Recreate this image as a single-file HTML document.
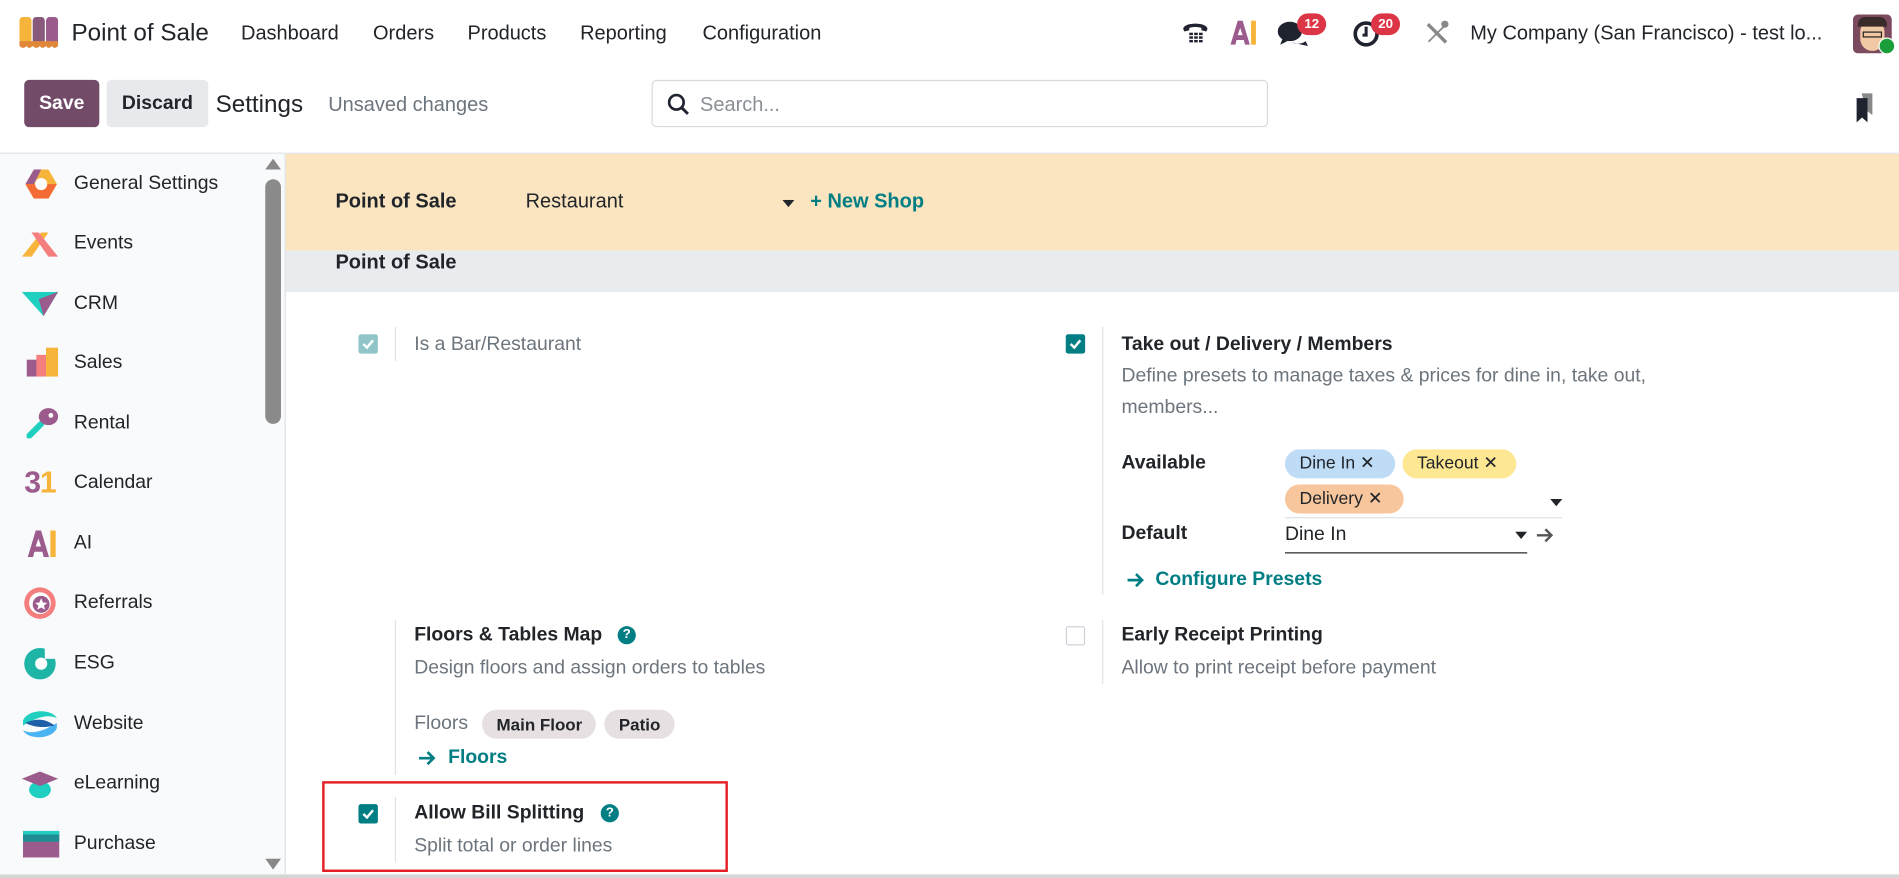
<!DOCTYPE html>
<html><head><meta charset="utf-8"><style>
html,body{margin:0;padding:0;width:1899px;height:878px;overflow:hidden;background:#fff}
#w{position:absolute;left:0;top:0;width:1568px;height:725px;transform:scale(1.2111);transform-origin:0 0;font-family:"Liberation Sans",sans-serif;color:#212529}
.a{position:absolute;white-space:nowrap}
.t{position:absolute;white-space:nowrap;transform:translateY(-50%)}
.b{font-weight:bold}
.g{color:#6c757d}
.teal{color:#017e84}
.cb{position:absolute;width:16px;height:16px;border-radius:2px;background:#017e84}
.cb svg{position:absolute;left:3px;top:3px}
.vl{position:absolute;width:1px;background:#dee2e6}
.side{font-size:16px;color:#212529}
.tag{position:absolute;height:24px;border-radius:12px;font-size:14.5px;line-height:24px;padding:0 0 0 12px;box-sizing:border-box}
.badge{position:absolute;background:#dc3545;color:#fff;font-size:11px;font-weight:bold;border-radius:9px;height:18px;line-height:18px;padding:0 6px}
</style></head><body><div id="w">

<!-- top nav -->
<svg class="a" style="left:16px;top:14px" width="32" height="26" viewBox="0 0 32 26"><rect x="0" y="0" width="10" height="22" rx="3" fill="#f7b43a"/><rect x="11" y="0" width="10" height="22" rx="3" fill="#875a7b"/><rect x="22" y="0" width="10" height="22" rx="3" fill="#9b5b8d"/><path d="M0 20h32v4c-2 2-4 2-5 0-2 2-4 2-5 0-2 2-4 2-5 0-2 2-4 2-6 0-2 2-4 2-5 0-2 2-4 2-6 0z" fill="#e0883a"/></svg>
<div class="t" style="left:59px;top:28px;font-size:20px">Point of Sale</div>
<div class="t" style="left:199px;top:28px;font-size:16.5px">Dashboard</div>
<div class="t" style="left:308px;top:28px;font-size:16.5px">Orders</div>
<div class="t" style="left:386px;top:28px;font-size:16.5px">Products</div>
<div class="t" style="left:479px;top:28px;font-size:16.5px">Reporting</div>
<div class="t" style="left:580px;top:28px;font-size:16.5px">Configuration</div>

<svg class="a" style="left:975px;top:16px" width="24" height="22" viewBox="0 0 24 22"><path d="M2 8c0-6 20-6 20 0l-1 2-4-1v-2c-3-1-7-1-10 0v2l-4 1z" fill="#1f2330"/><g fill="#1f2330"><rect x="7" y="11" width="3" height="2"/><rect x="11" y="11" width="3" height="2"/><rect x="15" y="11" width="3" height="2"/><rect x="7" y="14" width="3" height="2"/><rect x="11" y="14" width="3" height="2"/><rect x="15" y="14" width="3" height="2"/><rect x="7" y="17" width="3" height="2"/><rect x="11" y="17" width="3" height="2"/><rect x="15" y="17" width="3" height="2"/></g></svg>
<svg class="a" style="left:1016px;top:17px" width="22" height="20" viewBox="0 0 22 20"><path d="M0 20L6 0h4l6 20h-4l-1-4H5l-1 4z" fill="#9b5b8d"/><path d="M6 12h4l-2-6z" fill="#fff"/><rect x="17" y="0" width="4" height="20" fill="#f7b43a"/></svg>
<svg class="a" style="left:1055px;top:17px" width="26" height="22" viewBox="0 0 26 22"><ellipse cx="10" cy="9" rx="10" ry="8" fill="#1f2330"/><path d="M4 15l-2 5 6-3z" fill="#1f2330"/><path d="M12 18c4 2 9 1 11-1l2 4-5-1z" fill="#1f2330"/></svg>
<div class="badge" style="left:1071px;top:11px">12</div>
<svg class="a" style="left:1117px;top:16px" width="24" height="24" viewBox="0 0 24 24"><circle cx="11" cy="12" r="9" fill="none" stroke="#1f2330" stroke-width="3"/><path d="M11 6v7h-3" fill="none" stroke="#1f2330" stroke-width="2.5"/></svg>
<div class="badge" style="left:1132px;top:11px">20</div>
<svg class="a" style="left:1177px;top:17px" width="20" height="20" viewBox="0 0 20 20"><path d="M3 2l15 15-2 2L1 4z" fill="#888"/><path d="M17 2l-9 9 1 1 9-9z M2 17l6-6 1 1-6 6z" fill="#888"/><circle cx="16" cy="3" r="3" fill="#888"/></svg>
<div class="t" style="left:1214px;top:28px;font-size:16.5px">My Company (San Francisco) - test lo...</div>
<div class="a" style="left:1530px;top:12px;width:32px;height:32px;border-radius:4px;background:#7b4a5e;overflow:hidden"><div style="position:absolute;left:6px;top:6px;width:20px;height:24px;background:#f1c9a5;border-radius:8px 8px 10px 10px"></div><div style="position:absolute;left:4px;top:2px;width:24px;height:8px;background:#3a2a2a;border-radius:6px 6px 0 0"></div><div style="position:absolute;left:8px;top:14px;width:16px;height:5px;border:1.5px solid #222;box-sizing:border-box"></div></div>
<div class="a" style="left:1551px;top:31px;width:12px;height:12px;border-radius:50%;background:#1a9e3a;border:1px solid #fff"></div>

<!-- control bar -->
<div class="a" style="left:20px;top:66px;width:62px;height:39px;background:#714b67;border-radius:4px;color:#fff;font-weight:bold;font-size:16px;line-height:39px;text-align:center">Save</div>
<div class="a" style="left:88px;top:66px;width:84px;height:39px;background:#e7e9ed;border-radius:4px;font-weight:bold;font-size:16px;line-height:39px;text-align:center">Discard</div>
<div class="t" style="left:178px;top:87px;font-size:20px">Settings</div>
<div class="t g" style="left:271px;top:87px;font-size:16.5px">Unsaved changes</div>
<div class="a" style="left:538px;top:66px;width:509px;height:39px;border:1px solid #d8dadd;border-radius:4px;box-sizing:border-box"></div>
<svg class="a" style="left:551px;top:77px" width="18" height="18" viewBox="0 0 18 18"><circle cx="7.5" cy="7.5" r="6" fill="none" stroke="#1f2330" stroke-width="2.2"/><path d="M12 12l5 5" stroke="#1f2330" stroke-width="2.4"/></svg>
<div class="t" style="left:578px;top:87px;font-size:16.5px;color:#8a8f96">Search...</div>
<svg class="a" style="left:1531px;top:77px" width="18" height="24" viewBox="0 0 18 24"><path d="M6 0h9v18l-4-3z" fill="#888"/><path d="M2 4h9v20l-4.5-4L2 24z" fill="#1f2330"/></svg>
<div class="a" style="left:0;top:126px;width:1568px;height:1px;background:#dee2e6"></div>

<!-- sidebar -->
<div class="a" style="left:0;top:127px;width:235px;height:598px;background:#f9fafb;border-right:1px solid #dee2e6"></div>
<div class="a" style="left:219px;top:148px;width:13px;height:202px;background:#8a8a8a;border-radius:7px"></div>
<svg class="a" style="left:219px;top:131px" width="13" height="9"><path d="M0 9L6.5 0 13 9z" fill="#888"/></svg>
<svg class="a" style="left:219px;top:709px" width="13" height="9"><path d="M0 0L6.5 9 13 0z" fill="#888"/></svg>

<svg class="a" style="left:21px;top:140px" width="26" height="24" viewBox="0 0 26 24"><path d="M7 0h12l7 12-7 12H7L0 12z" fill="#f7b43a"/><path d="M0 12l7-12h6L7 12z" fill="#9b5b8d"/><path d="M0 12h26l-7 12H7z" fill="#f46b35"/><circle cx="13" cy="12" r="5" fill="#fff"/></svg>
<div class="t side" style="left:61px;top:152px">General Settings</div>
<svg class="a" style="left:18px;top:190px" width="30" height="22" viewBox="0 0 30 22"><path d="M0 22L16 2l6 0-14 20z" fill="#f7b43a"/><path d="M8 2h6l16 20h-8z" fill="#f47e7e"/></svg>
<div class="t side" style="left:61px;top:201px">Events</div>
<svg class="a" style="left:18px;top:241px" width="30" height="20" viewBox="0 0 30 20"><path d="M0 0h30l-12 20z" fill="#1fcfbf"/><path d="M14 6l16-6-12 20z" fill="#9b5b8d"/></svg>
<div class="t side" style="left:61px;top:251px">CRM</div>
<svg class="a" style="left:22px;top:287px" width="26" height="24" viewBox="0 0 26 24"><rect x="0" y="10" width="10" height="14" fill="#9b5b8d"/><rect x="8" y="6" width="8" height="18" fill="#f47e7e"/><rect x="16" y="0" width="10" height="24" fill="#f7b43a"/></svg>
<div class="t side" style="left:61px;top:300px">Sales</div>
<svg class="a" style="left:22px;top:336px" width="26" height="26" viewBox="0 0 26 26"><path d="M2 24l10-10" stroke="#1fcfbf" stroke-width="5" stroke-linecap="round"/><ellipse cx="18" cy="8" rx="8" ry="7" fill="#9b5b8d"/><circle cx="20" cy="7" r="2" fill="#fff"/></svg>
<div class="t side" style="left:61px;top:350px">Rental</div>
<div class="t b" style="left:20px;top:399px;font-size:25px;color:#9b5b8d;letter-spacing:-1px">3<span style="color:#f7b43a">1</span></div>
<div class="t side" style="left:61px;top:399px">Calendar</div>
<svg class="a" style="left:22px;top:438px" width="26" height="22" viewBox="0 0 22 20"><path d="M0 20L6 0h4l6 20h-4l-1-4H5l-1 4z" fill="#9b5b8d"/><path d="M6 12h4l-2-6z" fill="#fff"/><rect x="17" y="0" width="4" height="20" fill="#f7b43a"/></svg>
<div class="t side" style="left:61px;top:449px">AI</div>
<svg class="a" style="left:19px;top:484px" width="28" height="28" viewBox="0 0 28 28"><circle cx="14" cy="14" r="13" fill="#f47e7e"/><circle cx="14" cy="14" r="9" fill="#fff"/><circle cx="15" cy="15" r="7" fill="#9b5b8d"/><path d="M15 10l1.5 3.5 3.5.3-2.7 2.3.9 3.4-3.2-1.9-3.2 1.9.9-3.4-2.7-2.3 3.5-.3z" fill="#fff"/></svg>
<div class="t side" style="left:61px;top:498px">Referrals</div>
<svg class="a" style="left:19px;top:534px" width="28" height="28" viewBox="0 0 28 28"><circle cx="14" cy="14" r="13" fill="#1fb5a6"/><circle cx="15" cy="14" r="5" fill="#fff"/><rect x="18" y="0" width="10" height="10" fill="#f9fafb"/></svg>
<div class="t side" style="left:61px;top:548px">ESG</div>
<svg class="a" style="left:19px;top:585px" width="28" height="26" viewBox="0 0 28 26"><path d="M0 10C4 0 24 0 28 8 20 4 10 8 0 14z" fill="#1fcfbf"/><path d="M28 16C24 26 4 26 0 18c8 4 18 0 28-6z" fill="#4ab4f3"/><path d="M2 12c8-4 16-4 24 2-8 2-16 2-24-2z" fill="#1f5fa8"/></svg>
<div class="t side" style="left:61px;top:598px">Website</div>
<svg class="a" style="left:18px;top:634px" width="30" height="26" viewBox="0 0 30 26"><ellipse cx="15" cy="18" rx="9" ry="7" fill="#1fcfbf"/><path d="M0 9L15 3l15 6-15 6z" fill="#9b5b8d"/></svg>
<div class="t side" style="left:61px;top:647px">eLearning</div>
<svg class="a" style="left:19px;top:686px" width="30" height="22" viewBox="0 0 30 22"><rect x="0" y="0" width="30" height="22" fill="#9b5b8d"/><rect x="0" y="3" width="30" height="6" fill="#1f8f95"/><rect x="0" y="0" width="30" height="3" fill="#1fcfbf"/></svg>
<div class="t side" style="left:61px;top:697px">Purchase</div>

<!-- main -->
<div class="a" style="left:236px;top:127px;width:1332px;height:80px;background:#fae5c0"></div>
<div class="t b" style="left:277px;top:167px;font-size:16.5px">Point of Sale</div>
<div class="t" style="left:434px;top:167px;font-size:16.5px">Restaurant</div>
<svg class="a" style="left:646px;top:165px" width="10" height="6"><path d="M0 0h10L5 6z" fill="#212529"/></svg>
<div class="t b teal" style="left:669px;top:167px;font-size:16.5px">+ New Shop</div>
<div class="a" style="left:236px;top:207px;width:1332px;height:34px;background:#e9ecef"></div>
<div class="t b" style="left:277px;top:217px;font-size:16.5px">Point of Sale</div>

<!-- Is a Bar -->
<div class="cb" style="left:296px;top:276px;background:#8fc5c8"><svg width="10" height="10" viewBox="0 0 10 10"><path d="M1 5l3 3 5-6" fill="none" stroke="#fff" stroke-width="2"/></svg></div>
<div class="vl" style="left:326px;top:270px;height:28px"></div>
<div class="t g" style="left:342px;top:285px;font-size:16px">Is a Bar/Restaurant</div>

<!-- Take out -->
<div class="cb" style="left:880px;top:276px"><svg width="10" height="10" viewBox="0 0 10 10"><path d="M1 5l3 3 5-6" fill="none" stroke="#fff" stroke-width="2"/></svg></div>
<div class="vl" style="left:910px;top:270px;height:221px"></div>
<div class="t b" style="left:926px;top:285px;font-size:16px">Take out / Delivery / Members</div>
<div class="t g" style="left:926px;top:311px;font-size:16px">Define presets to manage taxes &amp; prices for dine in, take out,</div>
<div class="t g" style="left:926px;top:337px;font-size:16px">members...</div>
<div class="t b" style="left:926px;top:383px;font-size:16px">Available</div>
<div class="tag" style="left:1061px;top:371px;width:91px;background:#bfdcf7">Dine In &#x2715;</div>
<div class="tag" style="left:1158px;top:371px;width:94px;background:#fde793">Takeout &#x2715;</div>
<div class="tag" style="left:1061px;top:400px;width:98px;background:#f7c69c">Delivery &#x2715;</div>
<svg class="a" style="left:1280px;top:412px" width="10" height="6"><path d="M0 0h10L5 6z" fill="#212529"/></svg>
<div class="a" style="left:1061px;top:427px;width:229px;height:1px;background:#dee2e6"></div>
<div class="t b" style="left:926px;top:441px;font-size:16px">Default</div>
<div class="t" style="left:1061px;top:442px;font-size:16px">Dine In</div>
<div class="a" style="left:1061px;top:456px;width:200px;height:1px;background:#212529"></div>
<svg class="a" style="left:1251px;top:439px" width="10" height="6"><path d="M0 0h10L5 6z" fill="#212529"/></svg>
<svg class="a" style="left:1268px;top:435px" width="16" height="14" viewBox="0 0 16 14"><path d="M1 7h12M8 2l5 5-5 5" fill="none" stroke="#555" stroke-width="2"/></svg>
<svg class="a" style="left:930px;top:472px" width="16" height="14" viewBox="0 0 16 14"><path d="M1 7h12M8 2l5 5-5 5" fill="none" stroke="#017e84" stroke-width="2.2"/></svg>
<div class="t b teal" style="left:954px;top:479px;font-size:16px">Configure Presets</div>

<!-- Floors -->
<div class="vl" style="left:326px;top:512px;height:128px"></div>
<div class="t b" style="left:342px;top:525px;font-size:16px">Floors &amp; Tables Map</div>
<div class="a" style="left:510px;top:517px;width:15px;height:15px;border-radius:50%;background:#017e84;color:#fff;font-size:11px;font-weight:bold;text-align:center;line-height:15px">?</div>
<div class="t g" style="left:342px;top:552px;font-size:16px">Design floors and assign orders to tables</div>
<div class="t g" style="left:342px;top:598px;font-size:16px">Floors</div>
<div class="tag b" style="left:398px;top:586px;width:94px;background:#e7e0e2;font-size:14px">Main Floor</div>
<div class="tag b" style="left:499px;top:586px;width:58px;background:#e7e0e2;font-size:14px">Patio</div>
<svg class="a" style="left:345px;top:619px" width="16" height="14" viewBox="0 0 16 14"><path d="M1 7h12M8 2l5 5-5 5" fill="none" stroke="#017e84" stroke-width="2.2"/></svg>
<div class="t b teal" style="left:370px;top:626px;font-size:16px">Floors</div>

<!-- Early receipt -->
<div class="a" style="left:880px;top:517px;width:16px;height:16px;border:1px solid #ced4da;border-radius:2px;box-sizing:border-box;background:#fff"></div>
<div class="vl" style="left:910px;top:512px;height:53px"></div>
<div class="t b" style="left:926px;top:525px;font-size:16px">Early Receipt Printing</div>
<div class="t g" style="left:926px;top:552px;font-size:16px">Allow to print receipt before payment</div>

<!-- Bill splitting -->
<div class="a" style="left:266px;top:645px;width:335px;height:75px;border:2px solid #e31e24;box-sizing:border-box"></div>
<div class="cb" style="left:296px;top:664px"><svg width="10" height="10" viewBox="0 0 10 10"><path d="M1 5l3 3 5-6" fill="none" stroke="#fff" stroke-width="2"/></svg></div>
<div class="vl" style="left:326px;top:658px;height:54px"></div>
<div class="t b" style="left:342px;top:672px;font-size:16px">Allow Bill Splitting</div>
<div class="a" style="left:496px;top:664px;width:15px;height:15px;border-radius:50%;background:#017e84;color:#fff;font-size:11px;font-weight:bold;text-align:center;line-height:15px">?</div>
<div class="t g" style="left:342px;top:699px;font-size:16px">Split total or order lines</div>

<div class="a" style="left:0;top:722px;width:1568px;height:3px;background:#d6d6d6"></div>
</div></body></html>
